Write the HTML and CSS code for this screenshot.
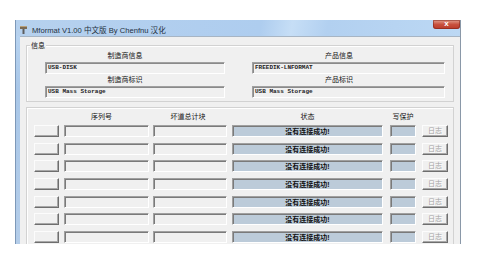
FILE: index.html
```html
<html>
<head>
  <title>Mformat V1.00</title>
  <link rel="stylesheet" href="styles.css">
</head>
<body>
  <div class="window">
    <div class="titlebar">
      <svg class="app-icon" width="7" height="8" viewBox="0 0 7 8">
        <rect x="0" y="0" width="7" height="3" fill="#7a6a55"/>
        <rect x="2.5" y="3" width="2" height="5" fill="#5e5e5e"/>
        <rect x="0" y="0" width="7" height="1" fill="#b8a07a"/>
      </svg>
      <span class="title">Mformat V1.00 中文版 By Chenfnu 汉化</span>
      <span class="close">x</span>
    </div>
    <div class="client">
      <div class="group info">
        <span class="legend">信息</span>
        <div class="col col-left">
          <div class="label">制造商信息</div>
          <div class="field">USB-DISK</div>
          <div class="label">制造商标识</div>
          <div class="field">USB Mass Storage</div>
        </div>
        <div class="col col-right">
          <div class="label">产品信息</div>
          <div class="field">FREEDIK-LNFORMAT</div>
          <div class="label">产品标识</div>
          <div class="field">USB Mass Storage</div>
        </div>
      </div>
      <div class="group devices">
        <div class="row head">
          <div class="c-btn"></div>
          <div class="c-sn">序列号</div>
          <div class="c-bad">坏道总计块</div>
          <div class="c-status">状态</div>
          <div class="c-wp">写保护</div>
          <div class="c-log"></div>
        </div>
        <div class="rows">
          <div class="row">
            <div class="c-btn btn"></div>
            <div class="c-sn sunken"></div>
            <div class="c-bad sunken"></div>
            <div class="c-status sunken filled">没有连接成功!</div>
            <div class="c-wp sunken filled"></div>
            <div class="c-log btn disabled">日志</div>
          </div>
          <div class="row">
            <div class="c-btn btn"></div>
            <div class="c-sn sunken"></div>
            <div class="c-bad sunken"></div>
            <div class="c-status sunken filled">没有连接成功!</div>
            <div class="c-wp sunken filled"></div>
            <div class="c-log btn disabled">日志</div>
          </div>
          <div class="row">
            <div class="c-btn btn"></div>
            <div class="c-sn sunken"></div>
            <div class="c-bad sunken"></div>
            <div class="c-status sunken filled">没有连接成功!</div>
            <div class="c-wp sunken filled"></div>
            <div class="c-log btn disabled">日志</div>
          </div>
          <div class="row">
            <div class="c-btn btn"></div>
            <div class="c-sn sunken"></div>
            <div class="c-bad sunken"></div>
            <div class="c-status sunken filled">没有连接成功!</div>
            <div class="c-wp sunken filled"></div>
            <div class="c-log btn disabled">日志</div>
          </div>
          <div class="row">
            <div class="c-btn btn"></div>
            <div class="c-sn sunken"></div>
            <div class="c-bad sunken"></div>
            <div class="c-status sunken filled">没有连接成功!</div>
            <div class="c-wp sunken filled"></div>
            <div class="c-log btn disabled">日志</div>
          </div>
          <div class="row">
            <div class="c-btn btn"></div>
            <div class="c-sn sunken"></div>
            <div class="c-bad sunken"></div>
            <div class="c-status sunken filled">没有连接成功!</div>
            <div class="c-wp sunken filled"></div>
            <div class="c-log btn disabled">日志</div>
          </div>
          <div class="row">
            <div class="c-btn btn"></div>
            <div class="c-sn sunken"></div>
            <div class="c-bad sunken"></div>
            <div class="c-status sunken filled">没有连接成功!</div>
            <div class="c-wp sunken filled"></div>
            <div class="c-log btn disabled">日志</div>
          </div>
        </div>
      </div>
    </div>
  </div>
</body>
</html>
```

FILE: styles.css
```css
body {
  margin: 0;
  background: #fff;
  font-family: "Liberation Sans", "Noto Sans CJK SC", sans-serif;
}
.window {
  margin: 20px 0 0 15px;
  width: 446px;
  height: 224px;
  box-sizing: border-box;
  display: flex;
  flex-direction: column;
  overflow: hidden;
  background: linear-gradient(to bottom, #bcd7f3, #a9c7e8 30%, #b4cde9);
  border-left: 1px solid #7d98b8;
  border-right: 1px solid #8a98a8;
}
.titlebar {
  height: 16px;
  flex: none;
  display: flex;
  align-items: center;
  padding-left: 4px;
  background: linear-gradient(100deg, #b6d1ee 0%, #aecdef 55%, #c6def6 62%, #b2d0f0 70%, #bcd8f4 100%);
}
.app-icon {
  margin-top: 3px;
}
.title {
  margin-left: 5px;
  margin-top: 2px;
  font-size: 7.6px;
  color: #24303e;
  white-space: nowrap;
}
.close {
  margin-left: auto;
  align-self: flex-start;
  width: 27px;
  height: 9px;
  line-height: 8px;
  text-align: center;
  font-size: 8px;
  font-weight: bold;
  color: #fff;
  background: linear-gradient(to bottom, #e39e8d, #c8503d 50%, #b93a2a);
  border-radius: 0 0 3px 3px;
  box-shadow: inset 0 0 0 1px rgba(120, 30, 20, 0.5);
}
.client {
  flex: 1;
  margin-left: 4px;
  background: #f0f0f0;
  border-top: 1px solid #a7b5c4;
  overflow: hidden;
}
.group {
  position: relative;
  margin: 0 6px;
  border: 1px solid #d2d2d2;
  box-shadow: inset 1px 1px 0 #fff;
}
.info {
  margin-top: 8px;
  display: flex;
  gap: 27px;
  padding: 4px 8px 3px 18px;
}
.legend {
  position: absolute;
  top: -5px;
  left: 3px;
  padding: 0 1px;
  background: #f0f0f0;
  font-size: 7px;
  line-height: 9px;
  color: #111;
}
.col-left {
  width: 180px;
}
.col-right {
  width: 193px;
}
.label {
  height: 12px;
  line-height: 12px;
  font-size: 7px;
  text-align: center;
  color: #111;
}
.col-left .label {
  padding-right: 20px;
}
.col-right .label {
  padding-right: 19px;
}
.field {
  height: 12px;
  box-sizing: border-box;
  padding-left: 2px;
  border-top: 1px solid #a0a0a0;
  border-left: 1px solid #a0a0a0;
  border-right: 1px solid #fff;
  border-bottom: 1px solid #fff;
  box-shadow: inset 1px 1px 0 #8a8a8a;
  font-family: "Liberation Mono", monospace;
  font-size: 6px;
  font-weight: bold;
  line-height: 10px;
  color: #222;
}
.devices {
  margin-top: 5px;
  padding: 3px 5px 0 7px;
  height: 200px;
}
.row {
  display: flex;
  height: 12px;
}
.head {
  margin-bottom: 2px;
  font-size: 7px;
  line-height: 12px;
  color: #111;
  text-align: center;
}
.rows {
  display: flex;
  flex-direction: column;
  gap: 5.67px;
}
.c-btn { width: 25px; }
.c-sn { width: 85px; margin-left: 5px; }
.c-bad { width: 74px; margin-left: 4px; }
.c-status { width: 151px; margin-left: 5px; }
.c-wp { width: 26px; margin-left: 7px; }
.c-log { width: 26px; margin-left: 6px; }
.head .c-sn { padding-right: 10px; box-sizing: border-box; }
.head .c-bad { padding-right: 4px; box-sizing: border-box; }
.btn {
  box-sizing: border-box;
  background: #f0f0f0;
  border-top: 1px solid #fcfcfc;
  border-left: 1px solid #fcfcfc;
  border-right: 1px solid #6e6e6e;
  border-bottom: 1px solid #6e6e6e;
  box-shadow: inset -1px -1px 0 #a8a8a8;
}
.sunken {
  box-sizing: border-box;
  border-top: 1px solid #a0a0a0;
  border-left: 1px solid #a0a0a0;
  border-right: 1px solid #fff;
  border-bottom: 1px solid #fff;
  box-shadow: inset 1px 1px 0 #7a7a7a;
}
.filled {
  background: #bccbd9;
}
.c-status.filled {
  text-align: center;
  font-size: 7px;
  font-weight: bold;
  line-height: 11px;
  color: #111;
}
.disabled {
  text-align: center;
  font-size: 7px;
  line-height: 10px;
  color: #a3a3a3;
  text-shadow: 1px 1px 0 #fff;
}
```
